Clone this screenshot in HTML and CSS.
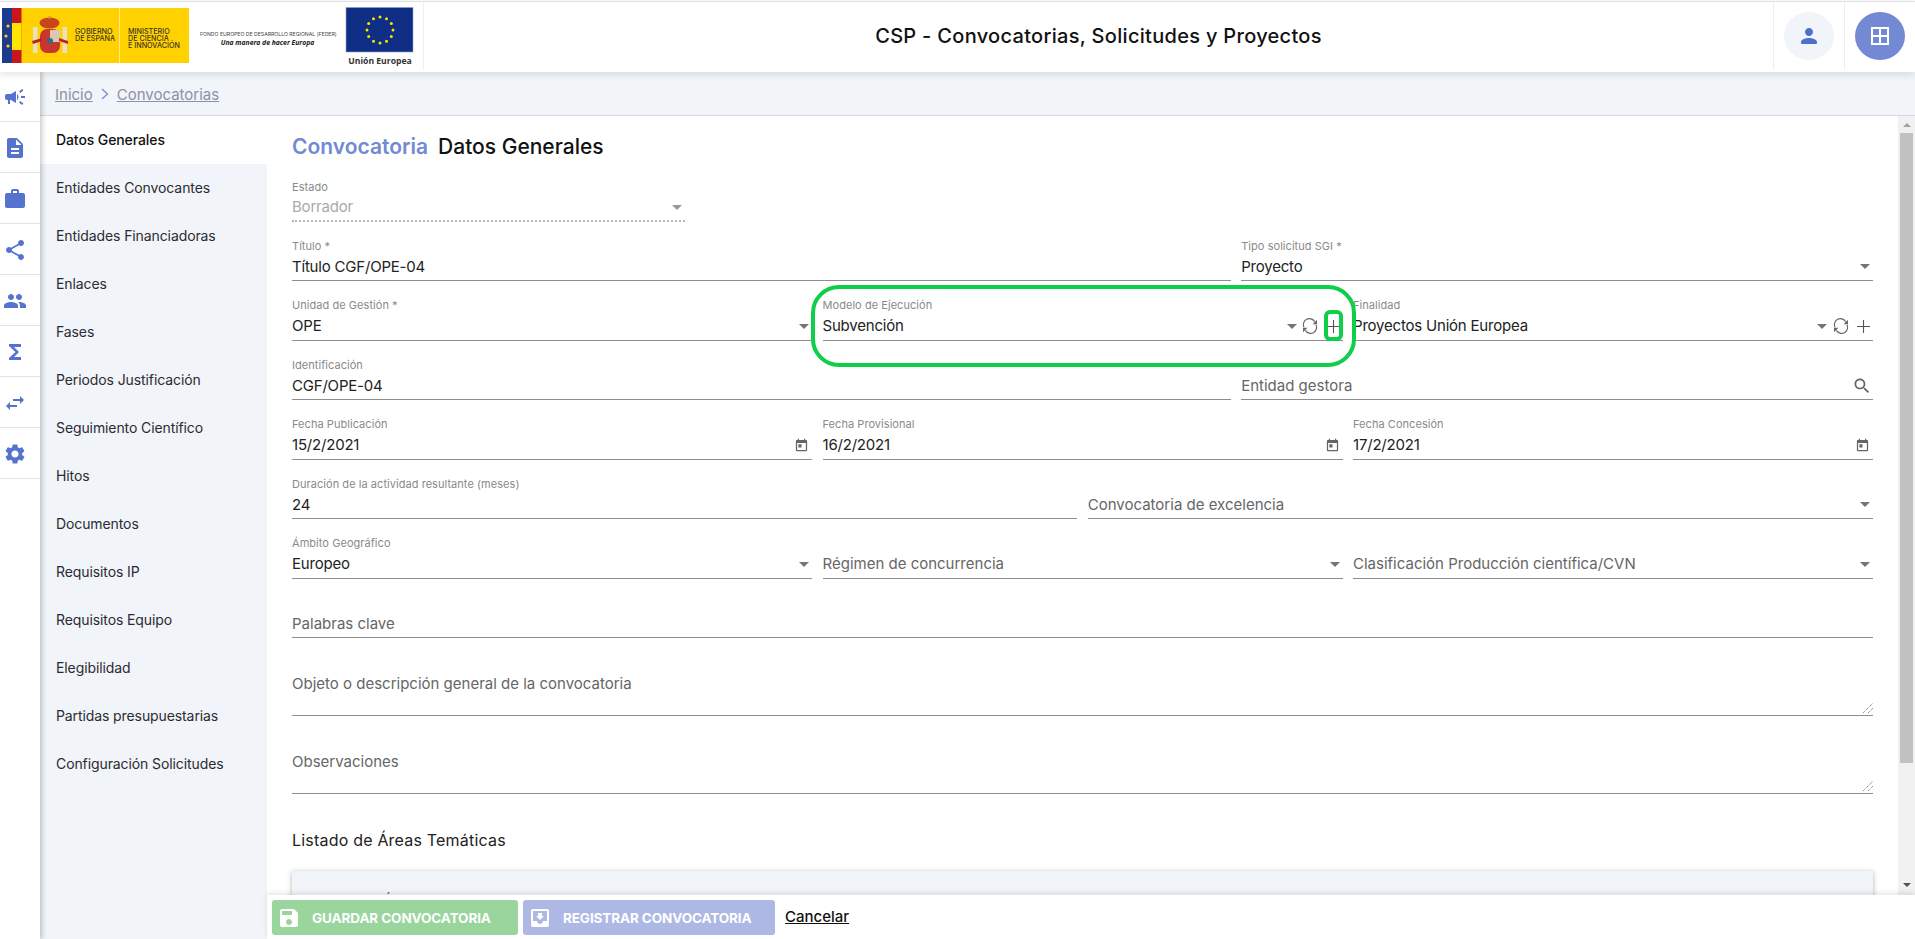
FILE: index.html
```html
<!DOCTYPE html>
<html lang="es">
<head>
<meta charset="utf-8">
<title>CSP - Convocatorias, Solicitudes y Proyectos</title>
<link rel="stylesheet" href="styles.css">
</head>
<body>
<svg class="defs" width="0" height="0" aria-hidden="true">
  <symbol id="i-campaign" viewBox="0 0 24 24"><path d="M18 11v2h4v-2h-4zm-2 6.61c.96.71 2.21 1.65 3.2 2.39.4-.53.8-1.07 1.2-1.6-.99-.74-2.24-1.68-3.2-2.4-.4.54-.8 1.08-1.2 1.61zM20.4 5.6c-.4-.53-.8-1.07-1.2-1.6-.99.74-2.24 1.68-3.2 2.4.4.53.8 1.07 1.2 1.6.96-.72 2.21-1.65 3.2-2.4zM4 9c-1.1 0-2 .9-2 2v2c0 1.1.9 2 2 2h1v4h2v-4h1l5 3V6L8 9H4zm11.5 3c0-1.33-.58-2.53-1.5-3.35v6.69c.92-.81 1.5-2.01 1.5-3.34z"/></symbol>
  <symbol id="i-doc" viewBox="0 0 24 24"><path d="M14 2H6c-1.1 0-1.99.9-1.99 2L4 20c0 1.1.89 2 1.99 2H18c1.1 0 2-.9 2-2V8l-6-6zm2 16H8v-2h8v2zm0-4H8v-2h8v2zm-3-5V3.5L18.5 9H13z"/></symbol>
  <symbol id="i-work" viewBox="0 0 24 24"><path d="M20 6h-4V4c0-1.11-.89-2-2-2h-4c-1.11 0-2 .89-2 2v2H4c-1.11 0-1.99.89-1.99 2L2 19c0 1.11.89 2 2 2h16c1.11 0 2-.89 2-2V8c0-1.11-.89-2-2-2zm-6 0h-4V4h4v2z"/></symbol>
  <symbol id="i-share" viewBox="0 0 24 24"><path d="M18 16.08c-.76 0-1.44.3-1.96.77L8.91 12.7c.05-.23.09-.46.09-.7s-.04-.47-.09-.7l7.05-4.11c.54.5 1.25.81 2.04.81 1.66 0 3-1.34 3-3s-1.34-3-3-3-3 1.34-3 3c0 .24.04.47.09.7L8.04 9.81C7.5 9.31 6.79 9 6 9c-1.66 0-3 1.34-3 3s1.34 3 3 3c.79 0 1.5-.31 2.04-.81l7.12 4.16c-.05.21-.08.43-.08.65 0 1.61 1.31 2.92 2.92 2.92 1.61 0 2.92-1.31 2.92-2.92s-1.31-2.92-2.92-2.92z"/></symbol>
  <symbol id="i-people" viewBox="0 0 24 24"><path d="M16 11c1.66 0 2.99-1.34 2.99-3S17.66 5 16 5c-1.66 0-3 1.34-3 3s1.34 3 3 3zm-8 0c1.66 0 2.99-1.34 2.99-3S9.66 5 8 5C6.34 5 5 6.34 5 8s1.34 3 3 3zm0 2c-2.33 0-7 1.17-7 3.5V19h14v-2.5c0-2.33-4.67-3.5-7-3.5zm8 0c-.29 0-.62.02-.97.05 1.16.84 1.97 1.97 1.97 3.45V19h6v-2.5c0-2.33-4.67-3.5-7-3.5z"/></symbol>
  <symbol id="i-sum" viewBox="0 0 24 24"><path d="M18 4H6v2l6.5 6L6 18v2h12v-3h-7l5-5-5-5h7z"/></symbol>
  <symbol id="i-swap" viewBox="0 0 24 24"><path d="M6.99 11L3 15l3.99 4v-3H14v-2H6.99v-3zM21 9l-3.99-4v3H10v2h7.01v3L21 9z"/></symbol>
  <symbol id="i-gear" viewBox="0 0 24 24"><path d="M19.14 12.94c.04-.3.06-.61.06-.94 0-.32-.02-.64-.07-.94l2.03-1.58c.18-.14.23-.41.12-.61l-1.92-3.32c-.12-.22-.37-.29-.59-.22l-2.39.96c-.5-.38-1.03-.7-1.62-.94l-.36-2.54c-.04-.24-.24-.41-.48-.41h-3.84c-.24 0-.43.17-.47.41l-.36 2.54c-.59.24-1.13.57-1.62.94l-2.39-.96c-.22-.08-.47 0-.59.22L2.74 8.87c-.12.21-.08.47.12.61l2.03 1.58c-.05.3-.09.63-.09.94s.02.64.07.94l-2.03 1.58c-.18.14-.23.41-.12.61l1.92 3.32c.12.22.37.29.59.22l2.39-.96c.5.38 1.03.7 1.62.94l.36 2.54c.05.24.24.41.48.41h3.84c.24 0 .44-.17.47-.41l.36-2.54c.59-.24 1.13-.56 1.62-.94l2.39.96c.22.08.47 0 .59-.22l1.92-3.32c.12-.22.07-.47-.12-.61l-2.01-1.58zM12 15.6c-1.98 0-3.6-1.62-3.6-3.6s1.62-3.6 3.6-3.6 3.6 1.62 3.6 3.6-1.62 3.6-3.6 3.6z"/></symbol>
  <symbol id="i-person" viewBox="0 0 24 24"><path d="M12 12c2.21 0 4-1.79 4-4s-1.79-4-4-4-4 1.79-4 4 1.79 4 4 4zm0 2c-2.67 0-8 1.34-8 4v1.2c0 .44.36.8.8.8h14.4c.44 0 .8-.36.8-.8V18c0-2.66-5.33-4-8-4z"/></symbol>
  <symbol id="i-grid" viewBox="0 0 24 24"><path d="M3 3v18h18V3H3zm8 16H5v-6h6v6zm0-8H5V5h6v6zm8 8h-6v-6h6v6zm0-8h-6V5h6v6z"/></symbol>
  <symbol id="i-search" viewBox="0 0 24 24"><path d="M15.5 14h-.79l-.28-.27C15.41 12.59 16 11.11 16 9.5 16 5.91 13.09 3 9.5 3S3 5.91 3 9.5 5.91 16 9.5 16c1.61 0 3.09-.59 4.23-1.57l.27.28v.79l5 4.99L20.49 19l-4.99-5zm-6 0C7.01 14 5 11.99 5 9.5S7.01 5 9.5 5 14 7.01 14 9.5 11.99 14 9.5 14z"/></symbol>
  <symbol id="i-today" viewBox="0 0 24 24"><path d="M19 3h-1V1h-2v2H8V1H6v2H5c-1.11 0-1.99.9-1.99 2L3 19c0 1.1.89 2 2 2h14c1.1 0 2-.9 2-2V5c0-1.1-.9-2-2-2zm0 16H5V8h14v11zM7 10h5v5H7z"/></symbol>
  <symbol id="i-save" viewBox="0 0 24 24"><path d="M17 3H5c-1.11 0-2 .9-2 2v14c0 1.1.89 2 2 2h14c1.1 0 2-.9 2-2V7l-4-4zm-5 16c-1.66 0-3-1.34-3-3s1.34-3 3-3 3 1.34 3 3-1.34 3-3 3zm3-10H5V5h10v4z"/></symbol>
  <symbol id="i-inbox" viewBox="0 0 24 24"><path d="M19 3H4.99c-1.11 0-1.98.89-1.98 2L3 19c0 1.1.88 2 1.99 2H19c1.1 0 2-.9 2-2V5c0-1.11-.9-2-2-2zm0 12h-4c0 1.66-1.35 3-3 3s-3-1.34-3-3H4.99V5H19v10zm-3-5h-2V7h-4v3H8l4 4 4-4z"/></symbol>
  <symbol id="i-sync" viewBox="0 0 16 16"><path class="thin" d="M2 9.2A6 6 0 0 1 12.6 3.6M14 6.8A6 6 0 0 1 3.4 12.4"/><path d="M15 1.8v4.4h-4.4zM1 14.2V9.8h4.4z"/></symbol>
  <symbol id="i-plus" viewBox="0 0 14 14"><path d="M6.4 0h1.2v6.4H14v1.2H7.600V14H6.400V7.600H0V6.400h6.400z"/></symbol>
  <symbol id="i-resize" viewBox="0 0 10 10"><path class="dots" d="M0 10L10 0M5 10L10 5"/></symbol>
</svg>

<header class="topbar">
  <div class="logos">
    <svg class="logo-svg" width="423" height="68" viewBox="0 2 423 68">
      <rect x="2" y="8" width="187" height="55" fill="#ffd100"/>
      <rect x="2" y="8" width="10" height="55" fill="#1d3a8f"/>
      <rect x="12" y="8" width="9.500" height="55" fill="#c8161d"/>
      <rect x="12" y="23" width="9.500" height="27" fill="#ffe600"/>
      <circle cx="8" cy="26" r="1.600" fill="#ffd100"/><circle cx="6" cy="36" r="1.600" fill="#ffd100"/><circle cx="8" cy="46" r="1.600" fill="#ffd100"/>
      <rect x="119" y="8" width="1" height="55" fill="#ffe98a"/>
      <ellipse cx="49.500" cy="23" rx="10" ry="5.500" fill="#c8461d"/>
      <path d="M49.500 16v3" stroke="#b89a30" stroke-width="1.500"/>
      <rect x="40" y="29" width="20" height="24" rx="7" fill="#c8362d"/>
      <rect x="50" y="30" width="10" height="12" fill="#d9c9b0"/>
      <circle cx="50" cy="41" r="3" fill="#3c6a7a"/>
      <rect x="33" y="27" width="4.500" height="26" fill="#e8e0c0"/>
      <rect x="62.500" y="27" width="4.500" height="26" fill="#e8e0c0"/>
      <path d="M32 41l10-3v3l-9 3zM68 41l-9-3v3l9 3z" fill="#b8242c"/>
      <text class="gov" x="75" y="34">GOBIERNO</text>
      <text class="gov" x="75" y="41">DE ESPAÑA</text>
      <text class="gov" x="128" y="34">MINISTERIO</text>
      <text class="gov" x="128" y="41">DE CIENCIA</text>
      <text class="gov" x="128" y="48">E INNOVACIÓN</text>
      <text class="feder" x="200" y="36">FONDO EUROPEO DE DESARROLLO REGIONAL (FEDER)</text>
      <text class="lema" x="267.500" y="44.500">Una manera de hacer Europa</text>
      <rect x="346" y="7.500" width="67" height="44.500" fill="#0f2f86" stroke="#8ea2c8" stroke-width=".6"/>
      <g fill="#ffe000">
        <circle cx="380" cy="17" r="1.500"/><circle cx="386.500" cy="18.700" r="1.500"/><circle cx="391.300" cy="23.500" r="1.500"/><circle cx="393" cy="30" r="1.500"/><circle cx="391.300" cy="36.500" r="1.500"/><circle cx="386.500" cy="41.300" r="1.500"/><circle cx="380" cy="43" r="1.500"/><circle cx="373.500" cy="41.300" r="1.500"/><circle cx="368.700" cy="36.500" r="1.500"/><circle cx="367" cy="30" r="1.500"/><circle cx="368.700" cy="23.500" r="1.500"/><circle cx="373.500" cy="18.700" r="1.500"/>
      </g>
      <text class="ue" x="380" y="64">Unión Europea</text>
    </svg>
  </div>
  <h1 class="app-title">CSP - Convocatorias, Solicitudes y Proyectos</h1>
  <div class="top-cell"><span class="round round-user"><svg class="ic-24"><use href="#i-person"/></svg></span></div>
  <div class="top-cell"><span class="round round-apps"><svg class="ic-24"><use href="#i-grid"/></svg></span></div>
</header>

<div class="layout">
  <nav class="rail">
    <a class="rail-item"><svg class="ic-24"><use href="#i-campaign"/></svg></a>
    <a class="rail-item"><svg class="ic-24"><use href="#i-doc"/></svg></a>
    <a class="rail-item"><svg class="ic-24"><use href="#i-work"/></svg></a>
    <a class="rail-item"><svg class="ic-24"><use href="#i-share"/></svg></a>
    <a class="rail-item"><svg class="ic-24"><use href="#i-people"/></svg></a>
    <a class="rail-item"><svg class="ic-24"><use href="#i-sum"/></svg></a>
    <a class="rail-item"><svg class="ic-24"><use href="#i-swap"/></svg></a>
    <a class="rail-item"><svg class="ic-24"><use href="#i-gear"/></svg></a>
  </nav>

  <div class="page">
    <div class="crumbs"><a>Inicio</a><svg class="crumb-sep" width="8" height="12" viewBox="0 0 8 12"><path d="M1 1l5.500 5L1 11"/></svg><a>Convocatorias</a></div>
    <div class="work">
      <aside class="tabs">
        <a class="tab tab-active">Datos Generales</a>
        <a class="tab">Entidades Convocantes</a>
        <a class="tab">Entidades Financiadoras</a>
        <a class="tab">Enlaces</a>
        <a class="tab">Fases</a>
        <a class="tab">Periodos Justificación</a>
        <a class="tab">Seguimiento Científico</a>
        <a class="tab">Hitos</a>
        <a class="tab">Documentos</a>
        <a class="tab">Requisitos IP</a>
        <a class="tab">Requisitos Equipo</a>
        <a class="tab">Elegibilidad</a>
        <a class="tab">Partidas presupuestarias</a>
        <a class="tab">Configuración Solicitudes</a>
      </aside>
      <div class="panel">
        <div class="scroller">
          <main class="form">
            <h2 class="form-title"><span class="accent">Convocatoria</span><span>Datos Generales</span></h2>

            <div class="row row-state">
              <div class="field disabled"><label>Estado</label><div class="control"><span class="value">Borrador</span><i class="arrow"></i></div></div>
            </div>
            <div class="row row-60">
              <div class="field"><label>Título *</label><div class="control"><span class="value">Título CGF/OPE-04</span></div></div>
              <div class="field"><label>Tipo solicitud SGI *</label><div class="control"><span class="value">Proyecto</span><i class="arrow"></i></div></div>
            </div>
            <div class="row row-3">
              <div class="field"><label>Unidad de Gestión *</label><div class="control"><span class="value">OPE</span><i class="arrow"></i></div></div>
              <div class="field"><label>Modelo de Ejecución</label><div class="control"><span class="value">Subvención</span><i class="arrow"></i><svg class="ic-sync"><use href="#i-sync"/></svg><svg class="ic-plus"><use href="#i-plus"/></svg></div></div>
              <div class="field"><label>Finalidad</label><div class="control"><span class="value">Proyectos Unión Europea</span><i class="arrow"></i><svg class="ic-sync"><use href="#i-sync"/></svg><svg class="ic-plus"><use href="#i-plus"/></svg></div></div>
            </div>
            <div class="row row-60">
              <div class="field"><label>Identificación</label><div class="control"><span class="value">CGF/OPE-04</span></div></div>
              <div class="field"><label>&nbsp;</label><div class="control"><span class="value hint">Entidad gestora</span><svg class="ic-search"><use href="#i-search"/></svg></div></div>
            </div>
            <div class="row row-3">
              <div class="field"><label>Fecha Publicación</label><div class="control"><span class="value">15/2/2021</span><svg class="ic-date"><use href="#i-today"/></svg></div></div>
              <div class="field"><label>Fecha Provisional</label><div class="control"><span class="value">16/2/2021</span><svg class="ic-date"><use href="#i-today"/></svg></div></div>
              <div class="field"><label>Fecha Concesión</label><div class="control"><span class="value">17/2/2021</span><svg class="ic-date"><use href="#i-today"/></svg></div></div>
            </div>
            <div class="row row-2">
              <div class="field"><label>Duración de la actividad resultante (meses)</label><div class="control"><span class="value">24</span></div></div>
              <div class="field"><label>&nbsp;</label><div class="control"><span class="value hint">Convocatoria de excelencia</span><i class="arrow"></i></div></div>
            </div>
            <div class="row row-3">
              <div class="field"><label>Ámbito Geográfico</label><div class="control"><span class="value">Europeo</span><i class="arrow"></i></div></div>
              <div class="field"><label>&nbsp;</label><div class="control"><span class="value hint">Régimen de concurrencia</span><i class="arrow"></i></div></div>
              <div class="field"><label>&nbsp;</label><div class="control"><span class="value hint">Clasificación Producción científica/CVN</span><i class="arrow"></i></div></div>
            </div>
            <div class="row">
              <div class="field"><label>&nbsp;</label><div class="control"><span class="value hint">Palabras clave</span></div></div>
            </div>
            <div class="row">
              <div class="field field-area"><span class="value hint">Objeto o descripción general de la convocatoria</span><svg class="ic-resize"><use href="#i-resize"/></svg></div>
            </div>
            <div class="row">
              <div class="field field-area"><span class="value hint">Observaciones</span><svg class="ic-resize"><use href="#i-resize"/></svg></div>
            </div>

            <h3 class="list-title">Listado de Áreas Temáticas</h3>
            <div class="card"><span>Área temática</span><span>Descripción</span></div>
          </main>
          <div class="scrollbar">
            <i class="sb-up"></i>
            <div class="sb-thumb"></div>
            <i class="sb-down"></i>
          </div>
        </div>
        <footer class="actions">
          <button class="btn btn-save"><svg class="ic-24"><use href="#i-save"/></svg>GUARDAR CONVOCATORIA</button>
          <button class="btn btn-register"><svg class="ic-24"><use href="#i-inbox"/></svg>REGISTRAR CONVOCATORIA</button>
          <a class="cancel">Cancelar</a>
        </footer>
      </div>
    </div>
  </div>
</div>

<div class="mark mark-big"></div>
<div class="mark mark-small"></div>
</body>
</html>
```
FILE: styles.css
```css
* { box-sizing: border-box; }
html, body { margin: 0; height: 100%; overflow: hidden; }
body {
  font-family: Inter, "Open Sans", "Liberation Sans", sans-serif;
  font-size: 14px;
  color: #222;
  background: #fff;
  display: flex;
  flex-direction: column;
}
.defs { position: absolute; }
a { color: inherit; }

/* top bar */
.topbar {
  height: 71px;
  flex: none;
  display: flex;
  border-top: 1px solid #e0e0e0;
  margin-top: 1px;
  margin-bottom: -1px;
  background: #fff;
  box-shadow: 0 2px 8px rgba(0,0,0,.12);
  position: relative;
  z-index: 3;
}
.logos { width: 424px; flex: none; border-right: 1px solid #eceff3; height: 68px; }
.logo-svg { display: block; }
.gov { font: 500 7.200px Inter, sans-serif; fill: #3a3520; }
.feder { font: 400 5.150px Inter, sans-serif; fill: #444; }
.lema { font: italic 700 6.800px "Open Sans", sans-serif; fill: #222; text-anchor: middle; }
.ue { font: 700 8.600px "Open Sans", sans-serif; fill: #333; text-anchor: middle; }
.app-title {
  flex: 1;
  margin: 0;
  text-align: center;
  font-size: 20px;
  font-weight: 500;
  line-height: 68px;
  color: #111;
  letter-spacing: .3px;
}
.top-cell { width: 71px; height: 68px; flex: none; border-left: 1px solid #eceff3; display: flex; align-items: center; justify-content: center; }
.round { width: 50px; height: 48px; border-radius: 50%; display: flex; align-items: center; justify-content: center; }
.round-user { background: #f1f4f8; color: #4f6fcf; }
.round-apps { background: #7389d4; color: #fff; }
.ic-24 { width: 24px; height: 24px; fill: currentColor; flex: none; }

.layout { flex: 1; display: flex; min-height: 0; }

/* icon rail */
.rail {
  width: 40px;
  flex: none;
  background: #fff;
  box-shadow: 2px 0 5px rgba(0,0,0,.22);
  position: relative;
  z-index: 2;
  color: #5672d0;
}
.rail-item { height: 51px; display: flex; align-items: center; justify-content: center; padding: 2px 10px 0 0; border-bottom: 1px solid #e2e2e2; }

.page { flex: 1; min-width: 0; display: flex; flex-direction: column; }
.crumbs {
  height: 45px;
  flex: none;
  display: flex;
  align-items: center;
  gap: 8px;
  padding: 2px 0 0 15px;
  background: #f1f4f8;
  border-bottom: 1px solid #d5d8dc;
  font-size: 15px;
  color: #8a92a6;
}
.crumbs a { text-decoration: underline; }
.crumb-sep { fill: none; stroke: #7389d4; stroke-width: 1.200; }

.work { flex: 1; display: flex; min-height: 0; }
.tabs { width: 227px; flex: none; background: #f1f4f8; }
.tab { display: flex; align-items: center; height: 48px; padding: 0 0 2px 16px; font-size: 14px; letter-spacing: -.1px; color: #2b2b33; }
.tab-active { background: #fff; font-weight: 500; color: #111; }

.panel { flex: 1; min-width: 0; display: flex; flex-direction: column; }
.scroller { flex: 1; min-height: 0; display: flex; overflow: hidden; }
.form { flex: 1; min-width: 0; padding: 0 25px; }
.form-title {
  margin: 0;
  padding-top: 19px;
  height: 46px;
  font-size: 21px;
  line-height: 24px;
  font-weight: 500;
  color: #111;
  display: flex;
  gap: 10px;
}
.accent { color: #7389d4; font-weight: 600; }

/* fields */
.row { display: grid; grid-template-columns: 1fr; column-gap: 10.500px; }
.row-state { grid-template-columns: 393px; }
.row-60 { grid-template-columns: 939fr 632fr; }
.row-3 { grid-template-columns: 1fr 1fr 1fr; }
.row-2 { grid-template-columns: 1fr 1fr; }
.field {
  height: 59.500px;
  padding-top: 17px;
  border-bottom: 1.500px solid #8e8e8e;
  display: flex;
  flex-direction: column;
  min-width: 0;
}
.field label { font-size: 11px; line-height: 14px; height: 14px; color: #8a8a8a; letter-spacing: .05px; white-space: nowrap; }
.control { display: flex; align-items: center; height: 20px; margin-top: 4px; }
.value { flex: 1; min-width: 0; font-size: 15px; line-height: 20px; letter-spacing: -.2px; white-space: nowrap; color: #222; }
.hint { color: #666; letter-spacing: 0; }
.arrow { flex: none; width: 0; height: 0; margin-right: 3px; border-left: 5px solid transparent; border-right: 5px solid transparent; border-top: 5px solid #757575; }
.disabled { border-bottom: 2px dotted #b5b5b5; padding-top: 18px; }
.disabled .control { margin-top: 3px; }
.disabled .value { color: #aaa; }
.disabled .arrow { border-top-color: #999; }
.ic-sync { width: 16px; height: 16px; margin: 0 8.200px 0 2.400px; flex: none; fill: #666; }
.thin { fill: none; stroke: #666; stroke-width: 1.100; }
.ic-plus { width: 13px; height: 13px; margin-right: 3px; flex: none; fill: #555; }
.ic-search { width: 20px; height: 20px; flex: none; margin-right: 1px; fill: #666; }
.ic-date { width: 15px; height: 15px; flex: none; margin-right: 3px; fill: #666; }
.field-area { height: 78px; padding-top: 36px; }
.ic-resize { width: 10px; height: 10px; flex: none; margin-top: auto; margin-bottom: 2px; align-self: flex-end; }
.dots { stroke: #666; stroke-width: 1; stroke-dasharray: 1 1; fill: none; }

.list-title { margin: 34px 0 19px; font-size: 16px; line-height: 24px; font-weight: 400; color: #222; letter-spacing: .2px; }
.card {
  height: 60px;
  background: #f1f4f8;
  box-shadow: 0 1px 5px rgba(0,0,0,.3);
  padding: 20px 0 0 91px;
  display: flex;
  font-size: 14px;
  line-height: 20px;
  color: #555;
}
.card span:first-child { width: 585px; }

/* scrollbar drawing */
.scrollbar { width: 17px; flex: none; background: #f1f1f1; display: flex; flex-direction: column; align-items: center; padding: 7px 0 8px; }
.sb-up { width: 0; height: 0; border-left: 4px solid transparent; border-right: 4px solid transparent; border-bottom: 4px solid #a3a3a3; }
.sb-thumb { width: 13px; height: 630px; margin-top: 6px; background: #c1c1c1; }
.sb-down { width: 0; height: 0; margin-top: auto; border-left: 4px solid transparent; border-right: 4px solid transparent; border-top: 4px solid #505050; }

/* action bar */
.actions {
  height: 44px;
  flex: none;
  display: flex;
  align-items: flex-start;
  gap: 5px;
  padding: 5px 0 0 5px;
  background: #fff;
  box-shadow: 0 -2px 5px rgba(0,0,0,.1);
  position: relative;
}
.btn {
  height: 35px;
  border: 0;
  border-radius: 3px;
  color: #fff;
  display: flex;
  align-items: center;
  gap: 11px;
  padding: 0 0 0 5px;
  font: 700 13.500px Inter, sans-serif;
  letter-spacing: -.1px;
  opacity: .95;
}
.btn-save { width: 246px; background: #94d398; }
.btn-register { width: 252px; background: #a9b5e3; }
.cancel { margin: 7px 0 0 5px; line-height: 20px; font-size: 15px; font-weight: 500; color: #111; text-decoration: underline; }

/* green callouts */
.mark { position: absolute; border: 4px solid #0fcf4a; pointer-events: none; z-index: 5; }
.mark-big { left: 811px; top: 285px; width: 545px; height: 82px; border-radius: 28px; }
.mark-small { left: 1324px; top: 310px; width: 19px; height: 31px; border-radius: 6px; }
```
